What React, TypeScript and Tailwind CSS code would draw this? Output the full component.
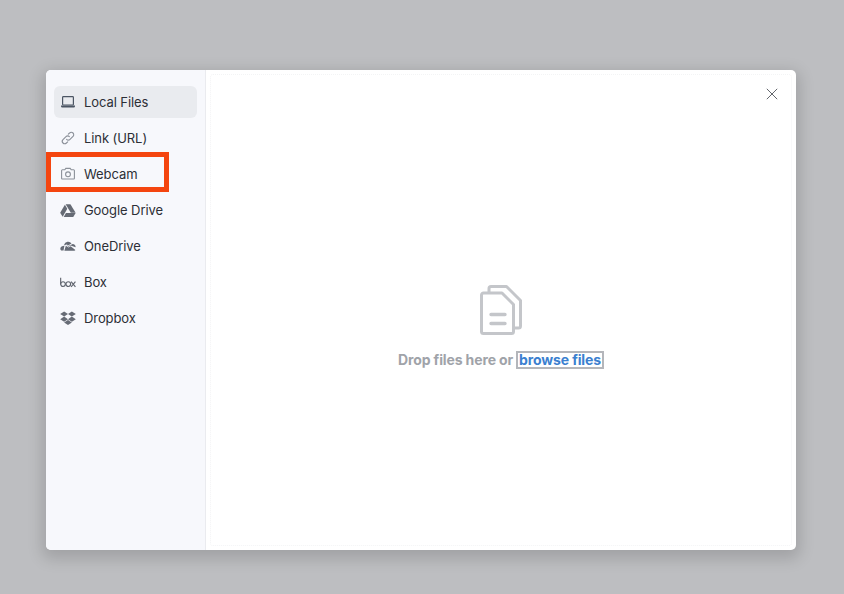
import React from "react";

const Laptop = () => (
  <svg width="16" height="16" viewBox="0 0 16 16" fill="none" stroke="#4b5563" strokeWidth="1.2">
    <rect x="2.6" y="2.6" width="10.8" height="8.4" rx="0.8" />
    <path d="M1 11.5h14v0.8a1.2 1.2 0 0 1-1.2 1.2H2.2A1.2 1.2 0 0 1 1 12.3z" fill="#4b5563" stroke="none" />
  </svg>
);
const LinkIcon = () => (
  <svg width="16" height="16" viewBox="0 0 16 16" fill="none" stroke="#8b9099" strokeWidth="1.1" strokeLinecap="round">
    <path d="M6.6 9.4a2.4 2.4 0 0 0 3.4 0l3-3a2.4 2.4 0 0 0-3.4-3.4L8.3 4.2" />
    <path d="M9.4 6.6a2.4 2.4 0 0 0-3.4 0l-3 3a2.4 2.4 0 0 0 3.4 3.4l1.3-1.2" />
  </svg>
);
const Camera = () => (
  <svg width="16" height="16" viewBox="0 0 16 16" fill="none" stroke="#8b9099" strokeWidth="1.1">
    <path d="M1.6 4.6a.8.8 0 0 1 .8-.8h2.4l1-1.4h4.4l1 1.4h2.4a.8.8 0 0 1 .8.8v7.6a.8.8 0 0 1-.8.8H2.4a.8.8 0 0 1-.8-.8z" />
    <circle cx="8" cy="8.3" r="2.4" />
  </svg>
);
const Drive = () => (
  <svg width="18" height="15" viewBox="0 0 18 15" fill="#666b75">
    <path d="M6.3 .4h5.4l5.9 9.5h-5.4z" />
    <path d="M5.5 .9 8.2 5.6 3 14.6 .2 9.9z" />
    <path d="M6.7 10.4h10.9l-2.7 4.4H4.1z" />
  </svg>
);
const OneDrive = () => (
  <svg width="18" height="12" viewBox="0 0 18 12" fill="#666b75">
    <path d="M4.6 4.6A4.7 4.7 0 0 1 13 3.2l-3.6 2-2.2-.9a3.9 3.9 0 0 0-1.6.9z" />
    <path d="M7.4 5.2l2.2.9 4-2.2a3.2 3.2 0 0 1 3.9 3.6L12 5.4 9.6 6.8z" />
    <path d="M5 5.4 3.6 5.9A3 3 0 0 0 1.3 11H4z" />
    <path d="M6.6 5.8 4.9 11.4h11.2a1.6 1.6 0 0 0 1.2-.9L12 6.4 9.6 7.8z" />
  </svg>
);
const BoxLogo = () => (
  <svg width="17" height="11" viewBox="0 0 17 11" fill="none" stroke="#5f646e" strokeWidth="1.2">
    <path d="M.7 .4v7" />
    <circle cx="3.2" cy="7.2" r="2.5" />
    <circle cx="8.8" cy="7.2" r="2.5" />
    <path d="M11.8 4.6l4.6 5.6M16.4 4.6l-4.6 5.6" />
  </svg>
);
const Dropbox = () => (
  <svg width="17" height="16" viewBox="0 0 17 16" fill="#666b75">
    <path d="M4.4 1 .2 3.8l4.2 2.7 4.1-2.7z" />
    <path d="M12.6 1 8.5 3.8l4.1 2.7 4.2-2.7z" />
    <path d="M.2 9.2l4.2 2.7 4.1-2.7-4.1-2.7z" />
    <path d="M12.6 6.5 8.5 9.2l4.1 2.7 4.2-2.7z" />
    <path d="M4.4 12.8l4.1 2.7 4.1-2.7-4.1-2.7z" />
  </svg>
);

const items: { label: string; icon: React.ReactNode; active?: boolean }[] = [
  { label: "Local Files", icon: <Laptop />, active: true },
  { label: "Link (URL)", icon: <LinkIcon /> },
  { label: "Webcam", icon: <Camera /> },
  { label: "Google Drive", icon: <Drive /> },
  { label: "OneDrive", icon: <OneDrive /> },
  { label: "Box", icon: <BoxLogo /> },
  { label: "Dropbox", icon: <Dropbox /> },
];

export default function App() {
  return (
    <div className="w-[844px] h-[594px] bg-[#bdbec1] pl-[46px] pt-[70px] overflow-hidden font-['Inter',sans-serif]">
      <div className="relative flex w-[750px] h-[480px] rounded-[5px] bg-white shadow-[0_5px_15px_4px_rgba(0,0,0,0.15)]">
        <aside className="w-[160px] shrink-0 bg-[#f7f8fc] border-r border-[#eaebef] rounded-l-[5px] pt-4 pl-2 pr-2 flex flex-col gap-1">
          {items.map((it) => (
            <div
              key={it.label}
              className={`flex items-center h-8 w-[143px] rounded-md pl-1.5 pt-0.5 text-[13px] font-normal tracking-[-0.08px] text-[#2c2f36] ${it.active ? "bg-[#e9ebef]" : ""}`}
            >
              <span className="w-4 mr-2 -mt-0.5 flex items-center justify-center shrink-0">{it.icon}</span>
              {it.label}
            </div>
          ))}
        </aside>
        <main className="flex-1 p-1">
          <div className="h-full border border-dotted border-[#f3f4f5] rounded-[3px] flex flex-col items-center pt-[210px]">
            <svg width="42" height="50" viewBox="0 0 42 50" fill="none" stroke="#c4c6ca" strokeWidth="3" strokeLinejoin="round" strokeLinecap="round">
              <path d="M9 7V3.5a2 2 0 0 1 2-2h15.5L40.5 15.5V41a2 2 0 0 1-2 2H34" />
              <path d="M3.5 8H22l11.5 11.5V46.5a2 2 0 0 1-2 2h-28a2 2 0 0 1-2-2V10a2 2 0 0 1 2-2z" />
              <path d="M11 29.5h14M11 38.5h14" strokeWidth="3.4" />
            </svg>
            <div className="mt-4 text-[14px] font-bold tracking-[-0.13px] leading-[18px] text-[#a0a3a9] flex items-center">
              <span>Drop files here or</span>
              <span className="ml-[3px] px-px border-2 border-[#b4b6bb] text-[#3b80d0] leading-[14px]">browse files</span>
            </div>
          </div>
        </main>
        <svg className="absolute right-[18px] top-[18px]" width="12" height="12" viewBox="0 0 12 12" stroke="#63666c" strokeWidth="1">
          <path d="M.8.8l10.4 10.4M11.2.8.8 11.2" />
        </svg>
        <div className="absolute left-0 top-[82px] w-[123px] h-10 border-[5px] border-[#f4450f]" />
      </div>
    </div>
  );
}
